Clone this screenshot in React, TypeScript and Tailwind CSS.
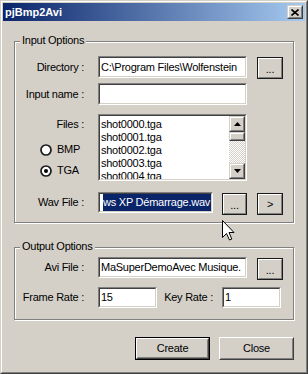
import React from "react";

function Edit({ className, children }: { className: string; children?: React.ReactNode }) {
  return (
    <div className={`border border-t-[#808080] border-l-[#808080] border-b-white border-r-white ${className}`}>
      <div className="h-full border border-t-[#404040] border-l-[#404040] border-b-[#d4d0c8] border-r-[#d4d0c8] bg-white flex items-center pl-[1px] overflow-hidden whitespace-nowrap">
        {children}
      </div>
    </div>
  );
}

function Btn({ className, children }: { className: string; children?: React.ReactNode }) {
  return (
    <div className={`border border-[#1a1a1a] ${className}`}>
      <div className="h-full border border-t-white border-l-white border-b-[#808080] border-r-[#808080] flex items-center justify-center">
        {children}
      </div>
    </div>
  );
}

function Raised({ className, children }: { className: string; children?: React.ReactNode }) {
  return (
    <div className={`border border-t-[#d4d0c8] border-l-[#d4d0c8] border-b-[#404040] border-r-[#404040] ${className}`}>
      <div className="h-full border border-t-white border-l-white border-b-[#808080] border-r-[#808080] bg-[#d4d0c8] flex items-center justify-center">
        {children}
      </div>
    </div>
  );
}

function Radio({ checked }: { checked?: boolean }) {
  return (
    <svg width="12" height="12" viewBox="0 0 12 12">
      <circle cx="6" cy="6" r="5" fill="#fff" stroke="#1a1a1a" strokeWidth="1.7" />
      {checked && <circle cx="6" cy="6" r="2" fill="#000" />}
    </svg>
  );
}

function Arrow({ up }: { up?: boolean }) {
  return (
    <svg width="7" height="4" viewBox="0 0 7 4">
      {up ? <path d="M3.5 0 L7 4 L0 4 Z" fill="#000" /> : <path d="M0 0 L7 0 L3.5 4 Z" fill="#000" />}
    </svg>
  );
}

export default function App() {
  const files = ["shot0000.tga", "shot0001.tga", "shot0002.tga", "shot0003.tga", "shot0004.tga"];
  return (
    <div className="relative w-[308px] h-[374px] bg-[#d4d0c8] font-['Liberation_Sans',Arial,sans-serif] text-[11px] leading-[13px] tracking-[-0.25px] text-black select-none">
      <div className="h-full border border-t-[#d4d0c8] border-l-[#d4d0c8] border-b-[#404040] border-r-[#404040]">
        <div className="h-full border border-t-white border-l-white border-b-[#808080] border-r-[#808080] p-[1px] flex flex-col">
          {/* Title bar */}
          <div className="h-[18px] shrink-0 flex items-center justify-between pl-[2px] pr-[2px] bg-[linear-gradient(to_right,#0a246a,#a6caf0)]">
            <span className="text-white font-bold tracking-normal">pjBmp2Avi</span>
            <Raised className="w-[16px] h-[14px]">
              <svg width="8" height="7" viewBox="0 0 8 7">
                <path d="M0.5 0.5 L7.5 6.5 M7.5 0.5 L0.5 6.5" stroke="#000" strokeWidth="1.6" />
              </svg>
            </Raised>
          </div>

          {/* Input Options */}
          <div className="relative mt-[20px] mx-[11px] h-[182px] shrink-0 border border-[#808080] shadow-[inset_1px_1px_0_#fff,1px_1px_0_#fff] pt-[14px]">
            <span className="absolute left-[5px] top-[-8px] bg-[#d4d0c8] px-[2px]">Input Options</span>

            <div className="flex items-start">
              <div className="w-[69px] h-[22px] flex items-center justify-end">Directory :</div>
              <Edit className="ml-[14px] w-[149px] h-[22px]">{"C:\\Program Files\\Wolfenstein"}</Edit>
              <Btn className="ml-[10px] mt-[1px] w-[26px] h-[22px]"><span className="pt-[3px]">...</span></Btn>
            </div>

            <div className="flex items-start mt-[4px]">
              <div className="w-[69px] h-[22px] flex items-center justify-end">Input name :</div>
              <Edit className="ml-[14px] w-[149px] h-[22px]" />
            </div>

            <div className="flex items-start mt-[9px]">
              <div className="w-[69px] flex flex-col">
                <div className="mt-[4px] text-right">Files :</div>
                <div className="mt-[12px] pl-[25px] flex items-center gap-[5px]">
                  <Radio />
                  <span>BMP</span>
                </div>
                <div className="mt-[8px] pl-[25px] flex items-center gap-[5px]">
                  <Radio checked />
                  <span>TGA</span>
                </div>
              </div>
              <div className="ml-[14px] w-[149px] h-[67px] border border-t-[#808080] border-l-[#808080] border-b-white border-r-white">
                <div className="h-full border border-t-[#404040] border-l-[#404040] border-b-[#d4d0c8] border-r-[#d4d0c8] bg-white flex">
                  <div className="flex-1 overflow-hidden pt-[2px] pl-[1px]">
                    {files.map((f) => (
                      <div key={f} className="h-[13px] whitespace-nowrap">{f}</div>
                    ))}
                  </div>
                  <div className="w-[16px] flex flex-col">
                    <Raised className="h-[16px] shrink-0"><Arrow up /></Raised>
                    <Raised className="h-[9px] shrink-0" />
                    <div className="flex-1 bg-[repeating-conic-gradient(#d4d0c8_0_25%,#ffffff_0_50%)] bg-[length:2px_2px]" />
                    <Raised className="h-[16px] shrink-0"><Arrow /></Raised>
                  </div>
                </div>
              </div>
            </div>

            <div className="flex items-start mt-[11px]">
              <div className="w-[69px] h-[21px] flex items-center justify-end">Wav File :</div>
              <div className="ml-[14px] w-[115px] h-[21px] border border-t-[#808080] border-l-[#808080] border-b-white border-r-white">
                <div className="h-full border border-t-[#404040] border-l-[#404040] border-b-[#d4d0c8] border-r-[#d4d0c8] bg-white flex justify-end overflow-hidden">
                  <span className="shrink-0 whitespace-nowrap bg-[#0a246a] text-white flex items-center pr-[1px]">ws XP Démarrage.wav</span>
                </div>
              </div>
              <Btn className="ml-[9px] mt-[1px] w-[25px] h-[22px]"><span className="pt-[3px]">...</span></Btn>
              <Btn className="ml-[10px] mt-[1px] w-[26px] h-[22px]">&gt;</Btn>
            </div>
          </div>

          {/* Output Options */}
          <div className="relative mt-[24px] mx-[11px] h-[73px] shrink-0 border border-[#808080] shadow-[inset_1px_1px_0_#fff,1px_1px_0_#fff] pt-[9px]">
            <span className="absolute left-[5px] top-[-8px] bg-[#d4d0c8] px-[2px]">Output Options</span>

            <div className="flex items-start">
              <div className="w-[69px] h-[21px] flex items-center justify-end">Avi File :</div>
              <Edit className="ml-[14px] w-[149px] h-[21px]">MaSuperDemoAvec Musique.</Edit>
              <Btn className="ml-[10px] mt-[1px] w-[26px] h-[22px]"><span className="pt-[3px]">...</span></Btn>
            </div>

            <div className="flex items-start mt-[7px]">
              <div className="w-[69px] h-[21px] flex items-center justify-end">Frame Rate :</div>
              <Edit className="ml-[14px] w-[59px] h-[21px]">15</Edit>
              <div className="w-[56px] h-[21px] flex items-center justify-end">Key Rate :</div>
              <Edit className="ml-[9px] w-[59px] h-[21px]">1</Edit>
            </div>
          </div>

          {/* Bottom buttons */}
          <div className="mt-[17px] flex justify-end gap-[9px] pr-[11px]">
            <div className="w-[75px] h-[23px] border border-black">
              <div className="h-full border border-t-white border-l-white border-b-[#404040] border-r-[#404040]">
                <div className="h-full border border-t-[#d4d0c8] border-l-[#d4d0c8] border-b-[#808080] border-r-[#808080] flex items-center justify-center">
                  Create
                </div>
              </div>
            </div>
            <div className="w-[75px] h-[23px] border border-t-white border-l-white border-b-[#404040] border-r-[#404040]">
              <div className="h-full border border-t-[#d4d0c8] border-l-[#d4d0c8] border-b-[#808080] border-r-[#808080] flex items-center justify-center">
                Close
              </div>
            </div>
          </div>
        </div>
      </div>

      {/* Mouse cursor */}
      <svg className="absolute left-[222px] top-[220px]" width="13" height="21" viewBox="0 0 13 21">
        <path d="M0.5 0.5 L0.5 17.5 L4.5 13.5 L7.5 20 L9.8 19 L7 12.5 L12 12.5 Z" fill="#fff" stroke="#000" strokeWidth="1" strokeLinejoin="miter" />
      </svg>
    </div>
  );
}
